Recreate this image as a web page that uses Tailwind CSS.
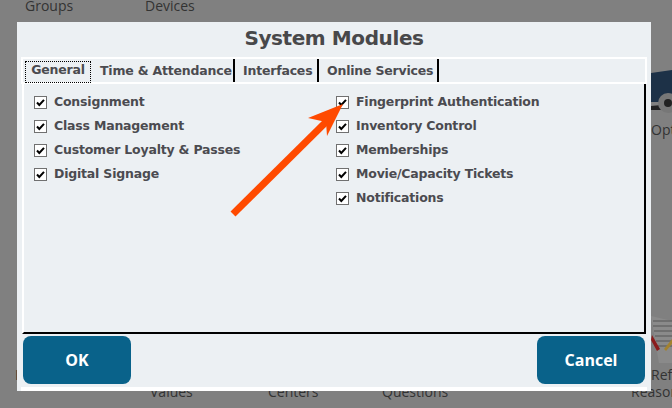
<!DOCTYPE html>
<html>
<head>
<meta charset="utf-8">
<script src="https://cdn.jsdelivr.net/npm/@tailwindcss/browser@4"></script>
</head>
<body class="m-0 p-0">
<div class="relative w-[672px] h-[408px] overflow-hidden bg-[#808080] font-['Open_Sans',sans-serif] text-[14px] leading-[18px] text-[#333]">
  <!-- dimmed page behind the dialog -->
  <span class="absolute left-[25px] top-[-3px]">Groups</span>
  <span class="absolute left-[145px] top-[-3px]">Devices</span>
  <span class="absolute left-[15px] top-[366px]">D</span>
  <span class="absolute left-[150px] top-[383px]">Values</span>
  <span class="absolute left-[268px] top-[383px]">Centers</span>
  <span class="absolute left-[382px] top-[383px]">Questions</span>
  <span class="absolute left-[651px] top-[121px]">Options</span>
  <span class="absolute left-[651px] top-[366px]">Refund</span>
  <span class="absolute left-[631px] top-[383px]">Reasons</span>
  <svg class="absolute left-[651px] top-[70px]" width="21" height="50" viewBox="0 0 21 50">
    <path d="M0 3 L21 0 V32 H0 Z" fill="#1d3147"/>
    <path d="M0 36 L21 34 V40 H0 Z" fill="#222"/>
    <circle cx="17" cy="33" r="10" fill="#777"/>
    <circle cx="17" cy="33" r="4" fill="#222"/>
  </svg>
  <svg class="absolute left-[651px] top-[313px]" width="21" height="50" viewBox="0 0 21 50">
    <path d="M0 3 L21 8 V50 H8 Z" fill="#8a8a8a"/>
    <path d="M2 8 H21 M2 13 H21 M3 18 H21 M4 23 H21 M5 28 H21 M6 33 H21" stroke="#555" stroke-width="1"/>
    <path d="M1 22 L9 36 L6 38 L0 27 Z" fill="#8a1c1c"/>
    <path d="M21 26 L13 36 L15 38 L21 31 Z" fill="#a3822f"/>
  </svg>

  <!-- dialog -->
  <div class="absolute left-[17px] top-[22px] w-[634px] h-[369px] bg-[#ecf0f3] flex flex-col font-['DejaVu_Sans',sans-serif] text-[#4b4b50]">
    <h1 class="h-[35px] pt-[3px] text-center text-[20px] leading-[27px] font-bold tracking-[-0.4px] text-[#48484a]">System Modules</h1>

    <div class="mx-[4px] h-[27px] border-2 border-white flex items-end text-[12.5px] leading-[16px] font-bold tracking-[-0.2px]">
      <div class="ml-[2px] mb-[-1px] w-[66px] h-[22px] border border-dotted border-black text-center">General</div>
      <div class="ml-[1px] w-[143px] h-[23px] pt-[4px] pl-[8px] border-l-0 border-r-2 border-black whitespace-nowrap">Time &amp; Attendance</div>
      <div class="w-[84px] h-[23px] pt-[4px] pl-[8px] border-r-2 border-black whitespace-nowrap">Interfaces</div>
      <div class="w-[120px] h-[23px] pt-[4px] pl-[8px] border-r-2 border-black whitespace-nowrap">Online Services</div>
    </div>

    <div class="ml-[5px] mr-[5px] h-[250px] border-l-2 border-white border-r-2 border-r-black border-b-2 border-b-black pt-[9px] pl-[10px] grid grid-cols-[302px_1fr] text-[12.5px] font-bold tracking-[-0.2px]">
      <div class="flex flex-col gap-[6px]">
        <label class="flex items-center gap-[7px] h-[18px]"><span class="w-[13px] h-[13px] bg-white border border-[#707070] flex items-center justify-center"><svg width="9" height="9" viewBox="0 0 9 9"><path d="M1 4.5 L3.3 7 L8 1.8" fill="none" stroke="#000" stroke-width="2"/></svg></span>Consignment</label>
        <label class="flex items-center gap-[7px] h-[18px]"><span class="w-[13px] h-[13px] bg-white border border-[#707070] flex items-center justify-center"><svg width="9" height="9" viewBox="0 0 9 9"><path d="M1 4.5 L3.3 7 L8 1.8" fill="none" stroke="#000" stroke-width="2"/></svg></span>Class Management</label>
        <label class="flex items-center gap-[7px] h-[18px]"><span class="w-[13px] h-[13px] bg-white border border-[#707070] flex items-center justify-center"><svg width="9" height="9" viewBox="0 0 9 9"><path d="M1 4.5 L3.3 7 L8 1.8" fill="none" stroke="#000" stroke-width="2"/></svg></span>Customer Loyalty &amp; Passes</label>
        <label class="flex items-center gap-[7px] h-[18px]"><span class="w-[13px] h-[13px] bg-white border border-[#707070] flex items-center justify-center"><svg width="9" height="9" viewBox="0 0 9 9"><path d="M1 4.5 L3.3 7 L8 1.8" fill="none" stroke="#000" stroke-width="2"/></svg></span>Digital Signage</label>
      </div>
      <div class="flex flex-col gap-[6px]">
        <label class="flex items-center gap-[7px] h-[18px]"><span class="w-[13px] h-[13px] bg-white border border-[#707070] flex items-center justify-center"><svg width="9" height="9" viewBox="0 0 9 9"><path d="M1 4.5 L3.3 7 L8 1.8" fill="none" stroke="#000" stroke-width="2"/></svg></span>Fingerprint Authentication</label>
        <label class="flex items-center gap-[7px] h-[18px]"><span class="w-[13px] h-[13px] bg-white border border-[#707070] flex items-center justify-center"><svg width="9" height="9" viewBox="0 0 9 9"><path d="M1 4.5 L3.3 7 L8 1.8" fill="none" stroke="#000" stroke-width="2"/></svg></span>Inventory Control</label>
        <label class="flex items-center gap-[7px] h-[18px]"><span class="w-[13px] h-[13px] bg-white border border-[#707070] flex items-center justify-center"><svg width="9" height="9" viewBox="0 0 9 9"><path d="M1 4.5 L3.3 7 L8 1.8" fill="none" stroke="#000" stroke-width="2"/></svg></span>Memberships</label>
        <label class="flex items-center gap-[7px] h-[18px]"><span class="w-[13px] h-[13px] bg-white border border-[#707070] flex items-center justify-center"><svg width="9" height="9" viewBox="0 0 9 9"><path d="M1 4.5 L3.3 7 L8 1.8" fill="none" stroke="#000" stroke-width="2"/></svg></span>Movie/Capacity Tickets</label>
        <label class="flex items-center gap-[7px] h-[18px]"><span class="w-[13px] h-[13px] bg-white border border-[#707070] flex items-center justify-center"><svg width="9" height="9" viewBox="0 0 9 9"><path d="M1 4.5 L3.3 7 L8 1.8" fill="none" stroke="#000" stroke-width="2"/></svg></span>Notifications</label>
      </div>
    </div>

    <div class="mt-[2px] mx-[6px] flex justify-between">
      <button class="w-[108px] h-[48px] rounded-[8px] bg-[#09628a] text-white text-[16px] font-bold font-['Open_Sans',sans-serif]">OK</button>
      <button class="w-[108px] h-[48px] rounded-[8px] bg-[#09628a] text-white text-[16px] font-bold font-['Open_Sans',sans-serif]">Cancel</button>
    </div>
    <div class="absolute left-0 right-0 bottom-0 h-[4px] ml-[4px] mr-[4px] bg-white"></div>
  </div>

  <!-- annotation arrow -->
  <svg class="absolute left-0 top-0" width="672" height="408" viewBox="0 0 672 408">
    <path d="M233 214 L329 119" stroke="#ff4a00" stroke-width="7" fill="none"/>
    <path d="M343 104 L308 118 L326 122 L327 136 Z" fill="#ff4a00"/>
  </svg>
</div>
</body>
</html>
